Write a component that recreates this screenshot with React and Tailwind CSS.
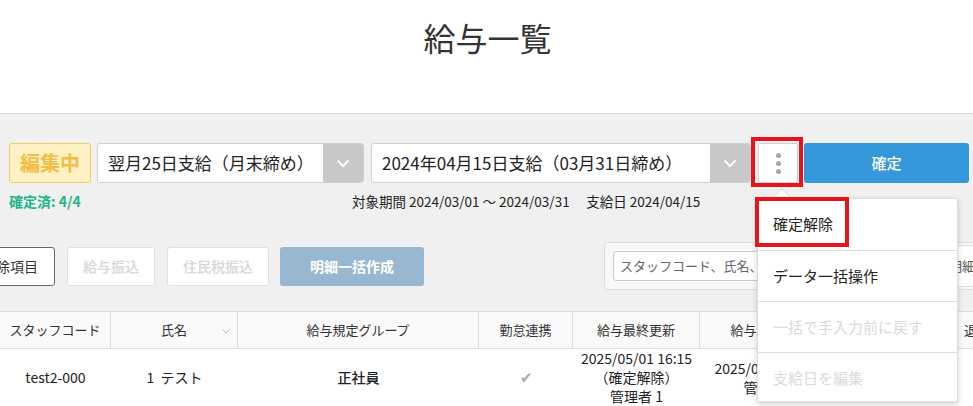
import React from 'react';

const font = { fontFamily: '"Noto Sans CJK JP", "Noto Sans", sans-serif' };

function Chevron() {
  return (
    <svg width="14" height="9" viewBox="0 0 14 9" fill="none">
      <path d="M1.5 1.5 L7 7 L12.5 1.5" stroke="#fff" strokeWidth="2" />
    </svg>
  );
}

function Select({ label, width }) {
  return (
    <div className={`flex h-[40px] ${width} bg-white border border-[#cfcfcf] rounded-[3px] overflow-hidden`}>
      <div className="flex-1 flex items-center pl-[10px] text-[17px] text-[#222]">{label}</div>
      <div className="w-[40px] bg-[#c8c8c8] flex items-center justify-center">
        <Chevron />
      </div>
    </div>
  );
}

const columns = [
  { w: 'w-[111px]', label: 'スタッフコード' },
  { w: 'w-[127px]', label: '氏名', sort: true },
  { w: 'w-[241px]', label: '給与規定グループ' },
  { w: 'w-[94px]', label: '勤怠連携' },
  { w: 'w-[127px]', label: '給与最終更新' },
  { w: 'w-[140px]', label: '給与最終確定' },
  { w: 'w-[288px]', label: '退職日' },
];

const menu = [
  { label: '確定解除', enabled: true },
  { label: 'データ一括操作', enabled: true },
  { label: '一括で手入力前に戻す', enabled: false },
  { label: '支給日を編集', enabled: false },
];

export default function App() {
  return (
    <div className="relative w-[973px] h-[406px] overflow-hidden bg-[#f0f0f0] text-[#333]" style={font}>
      <header className="h-[114px] bg-white border-b border-[#d9d9d9] flex justify-center pt-[17px]">
        <h1 className="text-[32px] leading-[40px] font-normal text-[#333] pl-[2px]">給与一覧</h1>
      </header>

      <div className="flex items-center mt-[29px] pl-[9px] h-[40px]">
        <div className="w-[82px] h-[40px] flex items-center justify-center rounded-[3px] border border-[#f3cb5a] bg-[#fff1c4] text-[#f2be45] text-[20px] font-bold">
          編集中
        </div>
        <div className="ml-[6px]">
          <Select label="翌月25日支給（月末締め）" width="w-[267px]" />
        </div>
        <div className="ml-[7px]">
          <Select label="2024年04月15日支給（03月31日締め）" width="w-[380px]" />
        </div>
        <button className="ml-[7px] w-[40px] h-[40px] bg-white border border-[#cfcfcf] rounded-[2px] flex flex-col items-center justify-center gap-[3px]">
          <span className="w-[5px] h-[5px] rounded-full bg-[#a8a8a8]" />
          <span className="w-[5px] h-[5px] rounded-full bg-[#a8a8a8]" />
          <span className="w-[5px] h-[5px] rounded-full bg-[#a8a8a8]" />
        </button>
        <button className="ml-[6px] w-[165px] h-[40px] bg-[#3498db] rounded-[3px] text-white text-[15px] font-medium">
          確定
        </button>
      </div>

      <div className="flex items-center mt-[9px] pl-[9px] h-[18px]">
        <div className="w-[343px] font-bold text-[#20b48a] text-[14px]">確定済: 4/4</div>
        <div className="text-[#222] text-[13.5px]">対象期間 2024/03/01 〜 2024/03/31　 支給日 2024/04/15</div>
      </div>

      <div className="flex items-center mt-[32px] h-[48px]">
        <div className="flex items-center -ml-[35px] gap-[12px] text-[14px]">
          <button className="w-[90px] h-[39px] bg-white border border-[#666] rounded-[3px] text-[#333]">控除項目</button>
          <button className="w-[88px] h-[39px] bg-white border border-[#e0e0e0] rounded-[3px] text-[#d6d6d6] font-medium">給与振込</button>
          <button className="w-[102px] h-[39px] bg-white border border-[#e0e0e0] rounded-[3px] text-[#d6d6d6] font-medium">住民税振込</button>
          <button className="w-[144px] h-[39px] bg-[#98b8d1] rounded-[3px] text-white font-bold -ml-[1px]">明細一括作成</button>
        </div>
        <div className="ml-[180px] flex-1 h-[48px] bg-[#f8f8f8] border border-[#dddddd] rounded-[4px] flex items-center gap-[7px] pl-[8px]">
          <div className="w-[322px] h-[30px] bg-white border border-[#c9c9c9] rounded-[3px] flex items-center pl-[6px] text-[13px] text-[#666] whitespace-nowrap overflow-hidden">
            スタッフコード、氏名、メールアドレスで検索
          </div>
          <div className="flex-1 h-[42px] bg-white border-y border-[#dddddd] flex items-center pl-[7px] text-[13px] text-[#555] whitespace-nowrap overflow-hidden">
            明細表示
          </div>
        </div>
      </div>

      <div className="mt-[21px] w-max">
        <div className="flex h-[38px] bg-[#fafafa] border-y border-[#dddddd] text-[13px] text-[#333]">
          {columns.map((c, i) => (
            <div key={i} className={`${c.w} relative flex items-center justify-center border-r border-[#dddddd] shrink-0`}>
              {c.label}
              {c.sort && (
                <svg className="absolute right-[7px] top-[17px]" width="8" height="5" viewBox="0 0 8 5" fill="none">
                  <path d="M0.5 0.5 L4 4 L7.5 0.5" stroke="#bbb" strokeWidth="1" />
                </svg>
              )}
            </div>
          ))}
        </div>
        <div className="flex h-[57px] bg-white text-[14px] text-[#222]">
          <div className="w-[111px] shrink-0 flex items-center justify-center">test2-000</div>
          <div className="w-[127px] shrink-0 flex items-center justify-center gap-[6px]">
            <span>1</span>
            <span>テスト</span>
          </div>
          <div className="w-[241px] shrink-0 flex items-center justify-center font-medium">正社員</div>
          <div className="w-[94px] shrink-0 flex items-center justify-center text-[#aaa] text-[15px]">✔</div>
          <div className="w-[127px] shrink-0 flex flex-col items-center justify-center leading-[19px]">
            <span>2025/05/01 16:15</span>
            <span>（確定解除）</span>
            <span>管理者 1</span>
          </div>
          <div className="w-[140px] shrink-0 flex flex-col items-center justify-center leading-[19px]">
            <span>2025/05/01 16:15</span>
            <span>管理者 1</span>
          </div>
          <div className="w-[288px] shrink-0" />
        </div>
      </div>

      {/* more menu */}
      <div className="absolute left-[757px] top-[198px] w-[201px] h-[204px] bg-white border border-[#dcdcdc] shadow-[0_2px_6px_rgba(0,0,0,0.18)] text-[15px]">
        <div className="absolute -top-[8px] left-[17px] w-[14px] h-[14px] bg-white border-l border-t border-[#dcdcdc] rotate-45" />
        {menu.map((m, i) => (
          <div
            key={i}
            className={`relative h-[51px] flex items-center pl-[15px] ${i > 0 ? 'border-t border-[#dddddd]' : ''} ${m.enabled ? 'text-[#222]' : 'text-[#dadada]'}`}
          >
            {m.label}
          </div>
        ))}
      </div>

      {/* annotation boxes */}
      <div className="absolute left-[751px] top-[137px] w-[52px] h-[50px] border-[4px] border-[#e8141c]" />
      <div className="absolute left-[755px] top-[197px] w-[94px] h-[50px] border-[4px] border-[#e8141c]" />
    </div>
  );
}
